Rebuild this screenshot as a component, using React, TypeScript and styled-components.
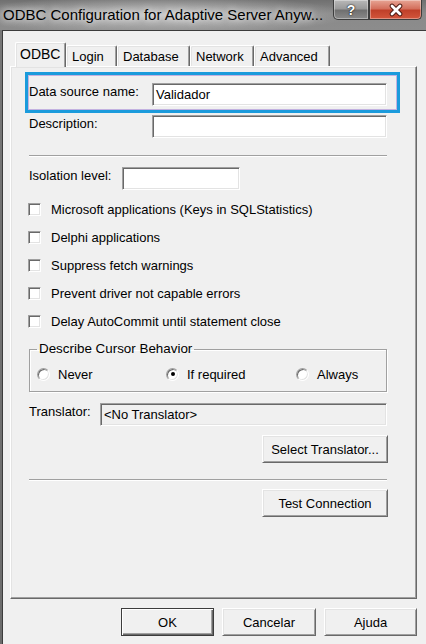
import React from 'react';
import styled, { createGlobalStyle } from 'styled-components';

const GlobalStyle = createGlobalStyle`
  html, body {
    margin: 0;
    padding: 0;
    background: #f0f0f0;
  }
  body {
    font-family: 'Liberation Sans', Arial, sans-serif;
    font-size: 13px;
    color: #000;
  }
  * {
    box-sizing: border-box;
  }
`;

const Window = styled.div`
  width: 426px;
  height: 644px;
  display: flex;
  flex-direction: column;
  overflow: hidden;
  background: linear-gradient(180deg, #777 0%, #6c6c6c 100%);
`;

const TitleBar = styled.div`
  height: 30px;
  flex: none;
  display: flex;
  align-items: flex-start;
  background: radial-gradient(
      ellipse 190px 20px at 160px 15px,
      rgba(200, 200, 200, 0.9) 0%,
      rgba(200, 200, 200, 0) 100%
    ),
    linear-gradient(180deg, #707070 0%, #8a8a8a 45%, #8c8c8c 100%);
`;

const Title = styled.div`
  padding-left: 3px;
  line-height: 29px;
  font-size: 15px;
  color: #000;
  white-space: nowrap;
  text-shadow: 0 0 6px rgba(255, 255, 255, 0.8), 0 0 10px rgba(255, 255, 255, 0.5);
`;

const Controls = styled.div`
  margin-left: auto;
  margin-right: 4px;
  display: flex;
`;

const CaptionButton = styled.div<{ $close?: boolean; $w: number }>`
  width: ${(p) => p.$w}px;
  height: 20px;
  display: flex;
  align-items: center;
  justify-content: center;
  border: 1px solid #3d3d3d;
  border-top: none;
  color: #fff;
  font-weight: bold;
  font-size: 14px;
  text-shadow: 0 0 2px #222, 0 0 1px #000;
  box-shadow: inset 0 0 0 1px rgba(255, 255, 255, 0.35);
  border-radius: ${(p) => (p.$close ? '0 0 5px 0' : '0 0 0 5px')};
  background: ${(p) =>
    p.$close
      ? 'linear-gradient(180deg, #e7a595 0%, #d4705d 45%, #c0402a 55%, #d3563c 100%)'
      : 'linear-gradient(180deg, #b9b9b9 0%, #9a9a9a 45%, #707070 55%, #8a8a8a 100%)'};
`;

const Client = styled.div`
  flex: 1;
  margin-left: 2px;
  border-top: 1px solid #3c3c3c;
  border-left: 1px solid #3c3c3c;
  background: #f0f0f0;
  padding: 11px 9px 0 7px;
  display: flex;
  flex-direction: column;
`;

const TabRow = styled.div`
  display: flex;
  align-items: flex-end;
  height: 25px;
  margin-left: 5px;
  margin-bottom: -1px;
  position: relative;
  z-index: 1;
`;

const Tab = styled.div<{ $active?: boolean; $w: number }>`
  width: ${(p) => p.$w}px;
  height: ${(p) => (p.$active ? 25 : 21)}px;
  margin-bottom: ${(p) => (p.$active ? 0 : 1)}px;
  display: flex;
  align-items: center;
  padding: 0 0 ${(p) => (p.$active ? 2 : 0)}px ${(p) => (p.$active ? 4 : 5)}px;
  background: #f0f0f0;
  border: 1px solid;
  border-color: #fff #696969 transparent #fff;
  border-bottom: none;
  box-shadow: inset -1px 0 #a0a0a0, inset 1px 1px #e3e3e3;
  border-radius: 2px 2px 0 0;
  font-size: ${(p) => (p.$active ? 14 : 13)}px;
  white-space: nowrap;
`;

const TabPage = styled.div`
  flex: none;
  height: 533px;
  border: 1px solid;
  border-color: #fff #696969 #696969 #fff;
  box-shadow: inset -1px -1px #a0a0a0, inset 1px 1px #e3e3e3;
  padding: 5px 29px 0 18px;
  display: flex;
  flex-direction: column;
`;

const Highlight = styled.div`
  margin: 0 -13px 0 -4px;
  padding: 8px 10px 4px 1px;
  border: 3px solid #1b9bdc;
  box-shadow: inset 0 0 0 1px #c3b2e0;
`;

const FieldRow = styled.div<{ $label: number; $top?: number }>`
  display: grid;
  grid-template-columns: ${(p) => p.$label}px 1fr;
  align-items: start;
  margin-top: ${(p) => p.$top ?? 0}px;
`;

const Label = styled.span`
  line-height: 16px;
  padding-top: 1px;
  white-space: nowrap;
`;

const TextBox = styled.div<{ $disabled?: boolean; $w?: number }>`
  height: 23px;
  width: ${(p) => (p.$w ? `${p.$w}px` : 'auto')};
  border: 1px solid;
  border-color: #a0a0a0 #fff #fff #a0a0a0;
  box-shadow: inset 1px 1px #696969, inset -1px -1px #e3e3e3;
  background: ${(p) => (p.$disabled ? '#f0f0f0' : '#fff')};
  padding: 0 3px;
  line-height: 22px;
  font-size: 13px;
  white-space: nowrap;
`;

const Separator = styled.div<{ $top: number }>`
  height: 2px;
  margin-top: ${(p) => p.$top}px;
  border-top: 1px solid #a0a0a0;
  border-bottom: 1px solid #fff;
`;

const CheckList = styled.div`
  margin-top: 5px;
  display: flex;
  flex-direction: column;
`;

const CheckRow = styled.label`
  height: 28px;
  display: flex;
  align-items: center;
  gap: 10px;
  margin-left: -1px;
  white-space: nowrap;
`;

const CheckBox = styled.span`
  width: 13px;
  height: 13px;
  flex: none;
  border: 1px solid;
  border-color: #a0a0a0 #fff #fff #a0a0a0;
  box-shadow: inset 1px 1px #696969, inset -1px -1px #e3e3e3;
  background: #fff;
`;

const Group = styled.fieldset`
  margin: 6px 0 0 0;
  padding: 6px 0 6px 7px;
  min-inline-size: 0;
  border: 1px solid #a0a0a0;
  box-shadow: inset 1px 1px #fff, 1px 1px #fff;
  display: grid;
  grid-template-columns: 129px 130px 1fr;
`;

const Legend = styled.legend`
  margin-left: 0;
  padding: 0 2px;
  line-height: 16px;
  font-size: 13.4px;
`;

const RadioItem = styled.label`
  height: 22px;
  display: flex;
  align-items: center;
  gap: 8px;
  white-space: nowrap;
  font-size: 13px;
`;

const Radio = styled.span<{ $checked?: boolean }>`
  width: 13px;
  height: 13px;
  flex: none;
  border-radius: 50%;
  border: 1px solid;
  border-color: #a0a0a0 #fff #fff #a0a0a0;
  box-shadow: inset 1px 1px #696969, inset -1px -1px #e3e3e3;
  background: #fff;
  display: flex;
  align-items: center;
  justify-content: center;

  &::after {
    content: '';
    width: 4px;
    height: 4px;
    border-radius: 50%;
    background: ${(p) => (p.$checked ? '#000' : 'transparent')};
  }
`;

const ButtonRow = styled.div<{ $top: number }>`
  display: flex;
  justify-content: flex-end;
  gap: 8px;
  margin-top: ${(p) => p.$top}px;
  margin-right: -1px;
`;

const Button = styled.button<{ $w: number; $default?: boolean }>`
  width: ${(p) => p.$w}px;
  height: 28px;
  padding: 0;
  font-family: 'Liberation Sans', Arial, sans-serif;
  font-size: 13px;
  color: #000;
  background: #f0f0f0;
  border: 1px solid;
  border-color: ${(p) => (p.$default ? '#3c3c3c' : '#fff #696969 #696969 #fff')};
  box-shadow: ${(p) =>
    p.$default
      ? 'inset 1px 1px #fff, inset -1px -1px #696969, inset -2px -2px #a0a0a0'
      : 'inset 1px 1px #e3e3e3, inset -1px -1px #a0a0a0'};
`;

const Footer = styled(ButtonRow)`
  margin-right: 0;
`;

const CloseGlyph = () => (
  <svg width="16" height="14" viewBox="0 0 16 14">
    <path d="M4 3 L12 11 M12 3 L4 11" stroke="#4a1810" strokeWidth="4.6" strokeLinecap="round" />
    <path d="M4 3 L12 11 M12 3 L4 11" stroke="#fff" strokeWidth="2.8" strokeLinecap="round" />
  </svg>
);

const checks = [
  'Microsoft applications (Keys in SQLStatistics)',
  'Delphi applications',
  'Suppress fetch warnings',
  'Prevent driver not capable errors',
  'Delay AutoCommit until statement close',
];

const tabs = [
  { name: 'ODBC', w: 51, active: true },
  { name: 'Login', w: 51 },
  { name: 'Database', w: 73 },
  { name: 'Network', w: 64 },
  { name: 'Advanced', w: 76 },
];

const App: React.FC = () => {
  return (
    <>
      <GlobalStyle />
      <Window>
        <TitleBar>
          <Title>ODBC Configuration for Adaptive Server Anyw...</Title>
          <Controls>
            <CaptionButton $w={36}>?</CaptionButton>
            <CaptionButton $w={53} $close>
              <CloseGlyph />
            </CaptionButton>
          </Controls>
        </TitleBar>
        <Client>
          <TabRow>
            {tabs.map((t) => (
              <Tab key={t.name} $w={t.w} $active={t.active}>
                {t.name}
              </Tab>
            ))}
          </TabRow>
          <TabPage>
            <Highlight>
              <FieldRow $label={123}>
                <Label>Data source name:</Label>
                <TextBox>Validador</TextBox>
              </FieldRow>
            </Highlight>
            <FieldRow $label={123} $top={2}>
              <Label>Description:</Label>
              <TextBox />
            </FieldRow>
            <Separator $top={17} />
            <FieldRow $label={93} $top={10}>
              <Label>Isolation level:</Label>
              <TextBox $w={118} />
            </FieldRow>
            <CheckList>
              {checks.map((c) => (
                <CheckRow key={c}>
                  <CheckBox />
                  {c}
                </CheckRow>
              ))}
            </CheckList>
            <Group>
              <Legend>Describe Cursor Behavior</Legend>
              <RadioItem>
                <Radio />
                Never
              </RadioItem>
              <RadioItem>
                <Radio $checked />
                If required
              </RadioItem>
              <RadioItem>
                <Radio />
                Always
              </RadioItem>
            </Group>
            <FieldRow $label={71} $top={11}>
              <Label>Translator:</Label>
              <TextBox $disabled>&lt;No Translator&gt;</TextBox>
            </FieldRow>
            <ButtonRow $top={9}>
              <Button $w={126}>Select Translator...</Button>
            </ButtonRow>
            <Separator $top={16} />
            <ButtonRow $top={8}>
              <Button $w={126}>Test Connection</Button>
            </ButtonRow>
          </TabPage>
          <Footer $top={9}>
            <Button $w={93} $default>
              OK
            </Button>
            <Button $w={94}>Cancelar</Button>
            <Button $w={93}>Ajuda</Button>
          </Footer>
        </Client>
      </Window>
    </>
  );
};

export default App;
